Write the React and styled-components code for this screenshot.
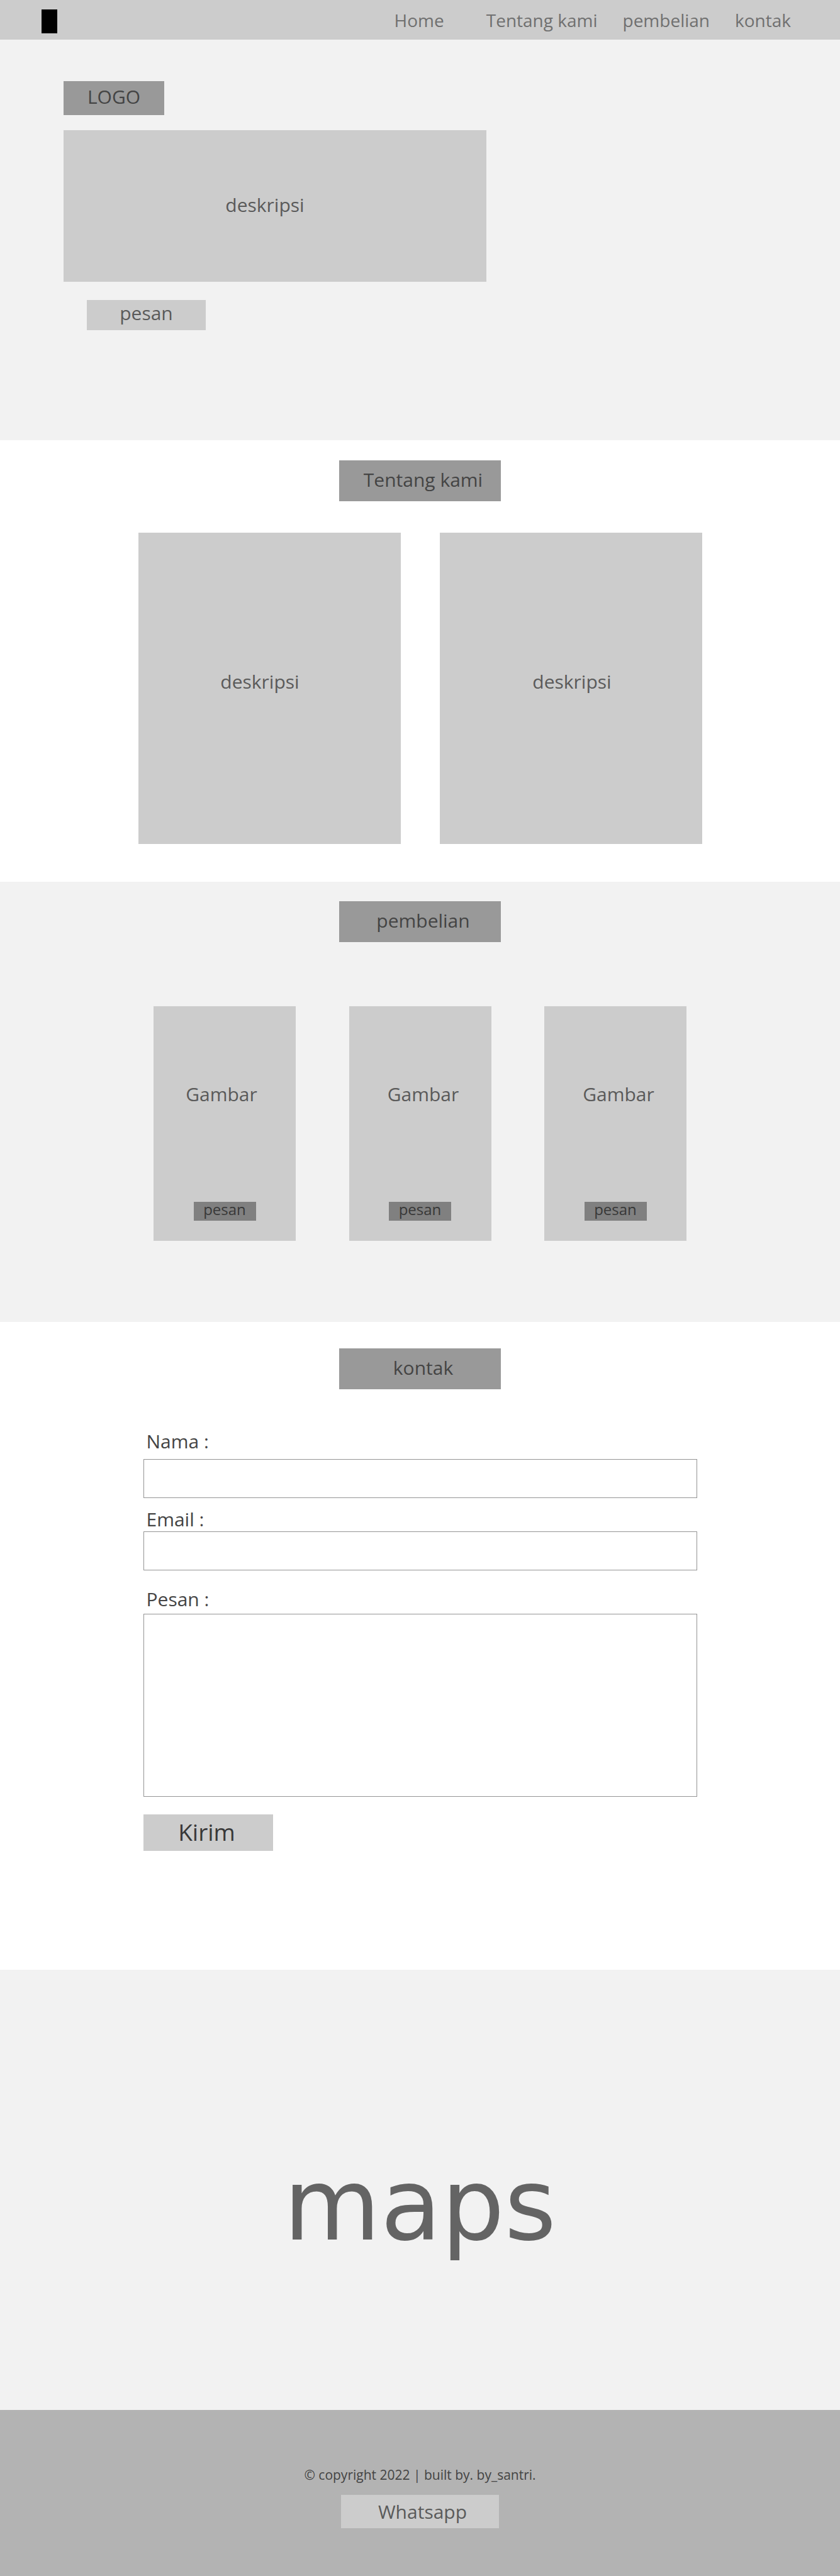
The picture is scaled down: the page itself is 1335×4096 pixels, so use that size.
import React from "react";
import styled, { createGlobalStyle } from "styled-components";

const GlobalStyle = createGlobalStyle`
  *, *::before, *::after { box-sizing: border-box; }
  body {
    margin: 0;
    background: #fff;
    font-family: "Open Sans", "Noto Sans", sans-serif;
    font-size: 30px;
    line-height: 32px;
    color: #444;
  }
  h1, h2, p { margin: 0; font: inherit; }
  button, input, textarea { font: inherit; color: inherit; border-radius: 0; }
`;

const Header = styled.header`
  display: flex;
  align-items: center;
  justify-content: space-between;
  height: 63px;
  padding: 0 78px 0 66px;
  background: #ccc;
`;

const Mark = styled.a`
  width: 25px;
  height: 38px;
  margin-top: 4px;
  background: #000;
`;

const Nav = styled.nav`
  display: flex;
  gap: 40px;
`;

const NavLink = styled.a`
  font-size: 28px;
  color: #707070;
  text-decoration: none;
  white-space: nowrap;

  &:first-child { margin-right: 27px; }
`;

const Hero = styled.section`
  display: flex;
  flex-direction: column;
  align-items: flex-start;
  min-height: 637px;
  padding: 66px 101px;
  background: #f2f2f2;
`;

const Logo = styled.h1`
  display: grid;
  place-items: center;
  width: 160px;
  height: 54px;
  margin-bottom: 24px;
  padding-bottom: 4px;
  background: #999;
`;

const Panel = styled.div`
  display: grid;
  place-items: center;
  width: 100%;
  max-width: ${(p) => p.$width}px;
  height: ${(p) => p.$height}px;
  padding: ${(p) => p.$padding || "0"};
  background: #ccc;
  color: #5a5a5a;
`;

const Button = styled.button`
  width: ${(p) => p.$width}px;
  height: ${(p) => p.$height}px;
  padding: 0 0 6px;
  border: 0;
  background: #ccc;
  color: #5a5a5a;
  cursor: pointer;
`;

const HeroButton = styled(Button)`
  margin: 29px 0 0 37px;
`;

const Section = styled.section`
  display: flex;
  flex-direction: column;
  align-items: center;
  padding: ${(p) => p.$padding};
  background: ${(p) => (p.$shaded ? "#f2f2f2" : "#fff")};
`;

const Heading = styled.h2`
  display: grid;
  place-items: center;
  width: 257px;
  height: 65px;
  padding: 0 0 4px 10px;
  background: #999;
`;

const AboutRow = styled.div`
  display: flex;
  gap: 62px;
  width: 100%;
  max-width: 896px;
  margin-top: 50px;
`;

const ProductRow = styled.div`
  display: flex;
  justify-content: space-between;
  width: 100%;
  max-width: 847px;
  margin-top: 102px;
`;

const Product = styled.article`
  display: flex;
  flex-direction: column;
  align-items: center;
  justify-content: space-between;
  width: 226px;
  height: 373px;
  padding: 124px 0 32px;
  background: #ccc;
`;

const ProductLabel = styled.p`
  padding-left: ${(p) => (p.$first ? 0 : 10)}px;
  padding-right: ${(p) => (p.$first ? 10 : 0)}px;
  color: #5a5a5a;
`;

const OrderButton = styled(Button)`
  background: #808080;
  color: #383838;
  font-size: 24px;
  line-height: 24px;
`;

const Form = styled.form`
  display: flex;
  flex-direction: column;
  align-items: flex-start;
  gap: 18px;
  width: 100%;
  max-width: 880px;
  margin-top: 67px;
`;

const Field = styled.div`
  display: flex;
  flex-direction: column;
  gap: ${(p) => p.$gap}px;
  width: 100%;
  margin-top: ${(p) => p.$top || 0}px;
`;

const Label = styled.label`
  padding-left: 5px;
`;

const Input = styled.input`
  width: 100%;
  height: 62px;
  padding: 0 16px;
  border: 1px solid #949494;
  background: #fff;
`;

const TextArea = styled.textarea`
  width: 100%;
  height: 291px;
  padding: 12px 16px;
  border: 1px solid #949494;
  background: #fff;
  resize: none;
`;

const SubmitButton = styled(Button)`
  margin-top: 10px;
  padding: 0 4px 2px 0;
  font-size: 37px;
  color: #383838;
`;

const Maps = styled.section`
  display: grid;
  place-items: center;
  height: 700px;
  padding-top: 48px;
  background: #f2f2f2;
  color: #646464;
  font-family: "DejaVu Sans", sans-serif;
  font-size: 158px;
  line-height: 200px;
`;

const Footer = styled.footer`
  display: flex;
  flex-direction: column;
  align-items: center;
  gap: 16px;
  min-height: 264px;
  padding: 87px 24px 76px;
  background: #b3b3b3;
`;

const Copyright = styled.p`
  font-size: 21px;
`;

const ChatLink = styled.a`
  display: grid;
  place-items: center;
  width: 251px;
  height: 53px;
  padding-left: 8px;
  background: #ccc;
  color: #5a5a5a;
  text-decoration: none;
`;

const links = [
  ["Home", "#home"],
  ["Tentang kami", "#tentang"],
  ["pembelian", "#pembelian"],
  ["kontak", "#kontak"],
];

export default function App() {
  return (
    <>
      <GlobalStyle />
      <Header>
        <Mark href="#home" />
        <Nav>
          {links.map(([text, href]) => (
            <NavLink key={href} href={href}>{text}</NavLink>
          ))}
        </Nav>
      </Header>
      <main>
        <Hero id="home">
          <Logo>LOGO</Logo>
          <Panel $width={672} $height={241} $padding="0 32px 4px 0"><p>deskripsi</p></Panel>
          <HeroButton type="button" $width={189} $height={48}>pesan</HeroButton>
        </Hero>

        <Section id="tentang" $padding="32px 24px 60px">
          <Heading>Tentang kami</Heading>
          <AboutRow>
            <Panel $width={417} $height={495} $padding="0 30px 22px 0"><p>deskripsi</p></Panel>
            <Panel $width={417} $height={495} $padding="0 0 22px 4px"><p>deskripsi</p></Panel>
          </AboutRow>
        </Section>

        <Section id="pembelian" $shaded $padding="31px 24px 129px">
          <Heading>pembelian</Heading>
          <ProductRow>
            {[0, 1, 2].map((n) => (
              <Product key={n}>
                <ProductLabel $first={n === 0}>Gambar</ProductLabel>
                <OrderButton type="button" $width={99} $height={30}>pesan</OrderButton>
              </Product>
            ))}
          </ProductRow>
        </Section>

        <Section id="kontak" $padding="42px 24px 189px">
          <Heading>kontak</Heading>
          <Form onSubmit={(e) => e.preventDefault()}>
            <Field $gap={12}>
              <Label htmlFor="nama">Nama :</Label>
              <Input id="nama" type="text" />
            </Field>
            <Field $gap={3}>
              <Label htmlFor="email">Email :</Label>
              <Input id="email" type="email" />
            </Field>
            <Field $gap={7} $top={12}>
              <Label htmlFor="pesan">Pesan :</Label>
              <TextArea id="pesan" />
            </Field>
            <SubmitButton type="submit" $width={206} $height={58}>Kirim</SubmitButton>
          </Form>
        </Section>

        <Maps id="maps"><p>maps</p></Maps>
      </main>
      <Footer>
        <Copyright>© copyright 2022 | built by. by_santri.</Copyright>
        <ChatLink href="#whatsapp">Whatsapp</ChatLink>
      </Footer>
    </>
  );
}
